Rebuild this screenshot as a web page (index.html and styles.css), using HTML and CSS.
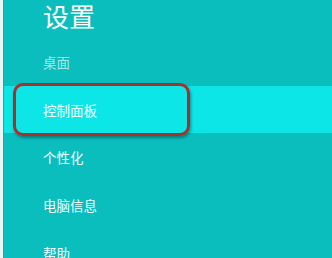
FILE: index.html
```html
<!DOCTYPE html>
<html lang="zh-CN">
<head>
<meta charset="utf-8">
<link rel="stylesheet" href="styles.css">
</head>
<body>
<div class="screen">
  <div class="edge"></div>
  <div class="panel">
    <div class="title">设置</div>
    <div class="item sub">桌面</div>
    <div class="item selected">控制面板</div>
    <div class="item">个性化</div>
    <div class="item">电脑信息</div>
    <div class="item">帮助</div>
    <div class="mark"></div>
  </div>
</div>
</body>
</html>
```
FILE: styles.css
```css
html, body {
  margin: 0;
  padding: 0;
}
body {
  width: 332px;
  height: 258px;
  overflow: hidden;
  font-family: "Noto Sans CJK SC", "Noto Sans", sans-serif;
}
.screen {
  display: flex;
  width: 332px;
  height: 258px;
}
.edge {
  width: 3px;
  background: #eef5f5;
  border-right: 1px solid #08b0b0;
}
.panel {
  position: relative;
  flex: 1;
  display: flex;
  flex-direction: column;
  background: #0bbebe;
  overflow: hidden;
}
.title {
  flex: none;
  margin-top: 2px;
  padding-left: 39px;
  height: 36px;
  font-size: 26px;
  line-height: 28px;
  color: #ffffff;
}
.item {
  flex: none;
  display: flex;
  align-items: center;
  height: 48px;
  padding-left: 39px;
  font-size: 13.5px;
  color: #f2ffff;
}
.item.sub {
  color: #a6e6e6;
}
.item.selected {
  height: 47px;
  background: #0de6e6;
}
.mark {
  position: absolute;
  left: 9px;
  top: 83px;
  width: 171px;
  height: 47px;
  border: 3px solid #a8302c;
  border-radius: 10px;
  box-shadow: 1px 2px 3px rgba(0, 60, 60, 0.5);
}
```
